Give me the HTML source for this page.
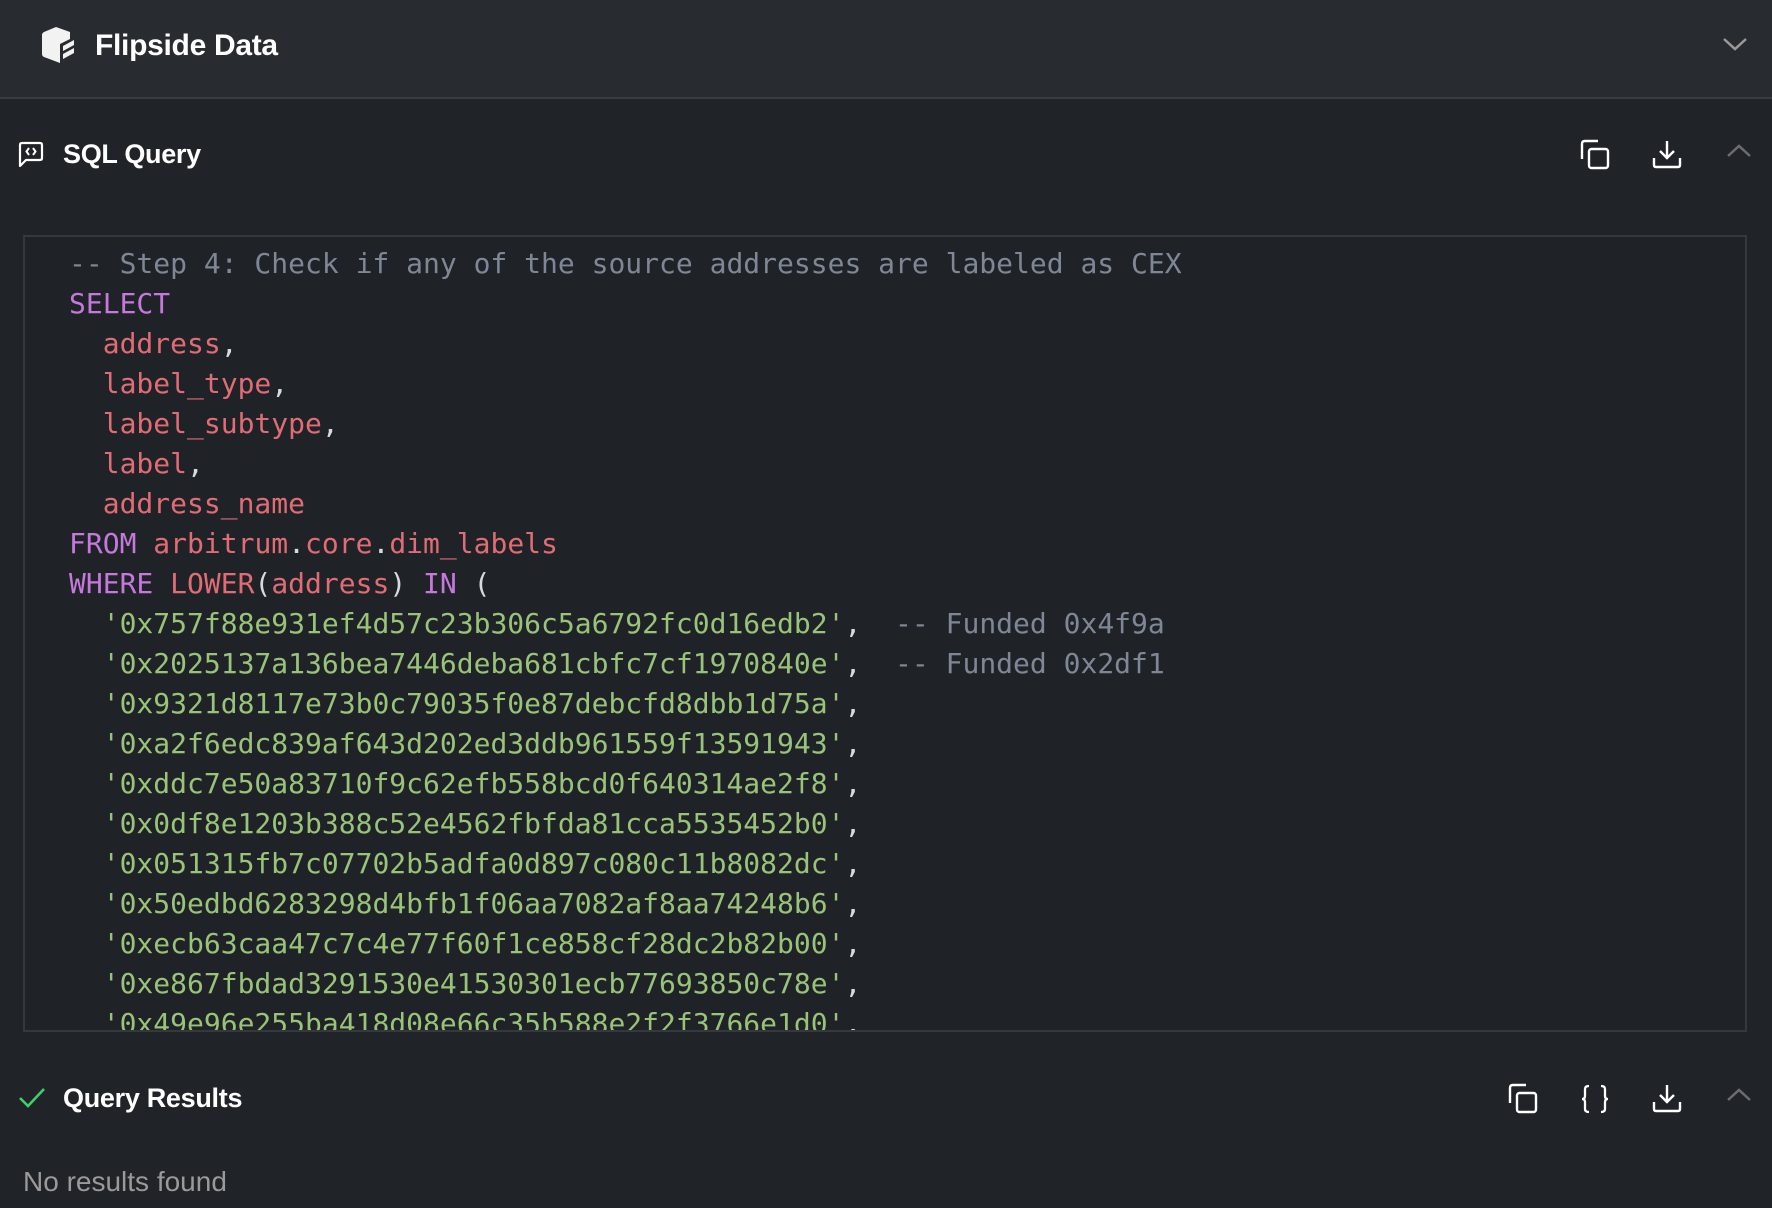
<!DOCTYPE html>
<html><head><meta charset="utf-8">
<style>
html,body{margin:0;padding:0}
body{width:1772px;height:1208px;background:#202327;overflow:hidden;position:relative;font-family:"Liberation Sans",sans-serif;color:#fff}
.hdr{position:absolute;left:0;top:0;width:1772px;height:97px;background:#282b2f;border-bottom:2px solid #393c40}
.title{position:absolute;left:95px;top:29px;font-size:30px;font-weight:bold;letter-spacing:-0.3px}
.sec{position:absolute;left:63px;font-size:27px;font-weight:bold;letter-spacing:-0.3px}
.code{position:absolute;left:23px;top:235px;width:1724px;height:797px;border:2px solid #35383d;background:#1f2226;overflow:hidden;box-sizing:border-box}
pre{margin:0;position:absolute;left:44px;top:7px;font-family:"DejaVu Sans Mono",monospace;font-size:28px;line-height:40px;color:#d7dae0}
.c{color:#7f8796}.k{color:#c678dd}.r{color:#e06c75}.s{color:#98c379}
svg{position:absolute}
.nr{position:absolute;left:23px;top:1166px;font-size:28px;color:#9a9a9a}
</style></head><body>
<div class="hdr">
<svg style="left:40px;top:26px" width="36" height="38" viewBox="0 0 36 38">
<path d="M16 1 L30 6 L30 13 L20 18 L20 37 L4 31 Q2 30 2 28 L2 9 Q2 7 4 6 Z" fill="#f2f2f2"/>
<path d="M23 20 L34 14 L34 19 L23 25 Z M23 28 L34 22 L34 27 L23 33 Z" fill="#f2f2f2"/>
</svg>
<div class="title">Flipside Data</div>
<svg style="left:1722px;top:36px" width="26" height="16" viewBox="0 0 26 16"><path d="M2 3 L13 13 L24 3" stroke="#9a9a9a" stroke-width="2.5" fill="none"/></svg>
</div>

<svg style="left:17px;top:141px" width="28" height="28" viewBox="0 0 28 28"><path d="M3 25 L3 4 Q3 2 5 2 L23 2 Q25 2 25 4 L25 17 Q25 19 23 19 L9 19 Z" stroke="#fff" stroke-width="2.2" fill="none" stroke-linejoin="round"/><path d="M12 7 L9.5 10.5 L12 14 M16 7 L18.5 10.5 L16 14" stroke="#fff" stroke-width="2" fill="none"/></svg>
<div class="sec" style="top:139px">SQL Query</div>
<svg style="left:1579px;top:139px" width="32" height="32" viewBox="0 0 32 32"><path d="M3 20 L3 5 Q3 2 6 2 L19 2" stroke="#fff" stroke-width="2.4" fill="none"/><rect x="10" y="10" width="19" height="19" rx="2.5" stroke="#fff" stroke-width="2.4" fill="none"/></svg>
<svg style="left:1652px;top:139px" width="30" height="30" viewBox="0 0 30 30"><path d="M15 2 L15 19 M8 12 L15 19 L22 12 M2 19 L2 26 Q2 28 4 28 L26 28 Q28 28 28 26 L28 19" stroke="#fff" stroke-width="2.4" fill="none"/></svg>
<svg style="left:1726px;top:143px" width="26" height="16" viewBox="0 0 26 16"><path d="M2 13 L13 3 L24 13" stroke="#6a6c70" stroke-width="2.5" fill="none"/></svg>

<div class="code"><pre><span class="c">-- Step 4: Check if any of the source addresses are labeled as CEX</span>
<span class="k">SELECT</span>
  <span class="r">address</span>,
  <span class="r">label_type</span>,
  <span class="r">label_subtype</span>,
  <span class="r">label</span>,
  <span class="r">address_name</span>
<span class="k">FROM</span> <span class="r">arbitrum</span>.<span class="r">core</span>.<span class="r">dim_labels</span>
<span class="k">WHERE</span> <span class="r">LOWER</span>(<span class="r">address</span>) <span class="k">IN</span> (
  <span class="s">'0x757f88e931ef4d57c23b306c5a6792fc0d16edb2'</span>,  <span class="c">-- Funded 0x4f9a</span>
  <span class="s">'0x2025137a136bea7446deba681cbfc7cf1970840e'</span>,  <span class="c">-- Funded 0x2df1</span>
  <span class="s">'0x9321d8117e73b0c79035f0e87debcfd8dbb1d75a'</span>,
  <span class="s">'0xa2f6edc839af643d202ed3ddb961559f13591943'</span>,
  <span class="s">'0xddc7e50a83710f9c62efb558bcd0f640314ae2f8'</span>,
  <span class="s">'0x0df8e1203b388c52e4562fbfda81cca5535452b0'</span>,
  <span class="s">'0x051315fb7c07702b5adfa0d897c080c11b8082dc'</span>,
  <span class="s">'0x50edbd6283298d4bfb1f06aa7082af8aa74248b6'</span>,
  <span class="s">'0xecb63caa47c7c4e77f60f1ce858cf28dc2b82b00'</span>,
  <span class="s">'0xe867fbdad3291530e41530301ecb77693850c78e'</span>,
  <span class="s">'0x49e96e255ba418d08e66c35b588e2f2f3766e1d0'</span>,
  <span class="s">'0x0000000000000000000000000000000000000000'</span>,</pre></div>

<svg style="left:18px;top:1086px" width="28" height="24" viewBox="0 0 28 24"><path d="M2 12 L10 20 L26 3" stroke="#3fcf6a" stroke-width="2.6" fill="none"/></svg>
<div class="sec" style="top:1083px">Query Results</div>
<svg style="left:1507px;top:1083px" width="32" height="32" viewBox="0 0 32 32"><path d="M3 20 L3 5 Q3 2 6 2 L19 2" stroke="#fff" stroke-width="2.4" fill="none"/><rect x="10" y="10" width="19" height="19" rx="2.5" stroke="#fff" stroke-width="2.4" fill="none"/></svg>
<svg style="left:1580px;top:1084px" width="30" height="30" viewBox="0 0 30 30"><path d="M9 2 Q5 2 5 5 L5 12 Q5 15 2 15 Q5 15 5 18 L5 25 Q5 28 9 28 M21 2 Q25 2 25 5 L25 12 Q25 15 28 15 Q25 15 25 18 L25 25 Q25 28 21 28" stroke="#fff" stroke-width="2.3" fill="none"/></svg>
<svg style="left:1652px;top:1083px" width="30" height="30" viewBox="0 0 30 30"><path d="M15 2 L15 19 M8 12 L15 19 L22 12 M2 19 L2 26 Q2 28 4 28 L26 28 Q28 28 28 26 L28 19" stroke="#fff" stroke-width="2.4" fill="none"/></svg>
<svg style="left:1726px;top:1087px" width="26" height="16" viewBox="0 0 26 16"><path d="M2 13 L13 3 L24 13" stroke="#6a6c70" stroke-width="2.5" fill="none"/></svg>
<div class="nr">No results found</div>
</body></html>
